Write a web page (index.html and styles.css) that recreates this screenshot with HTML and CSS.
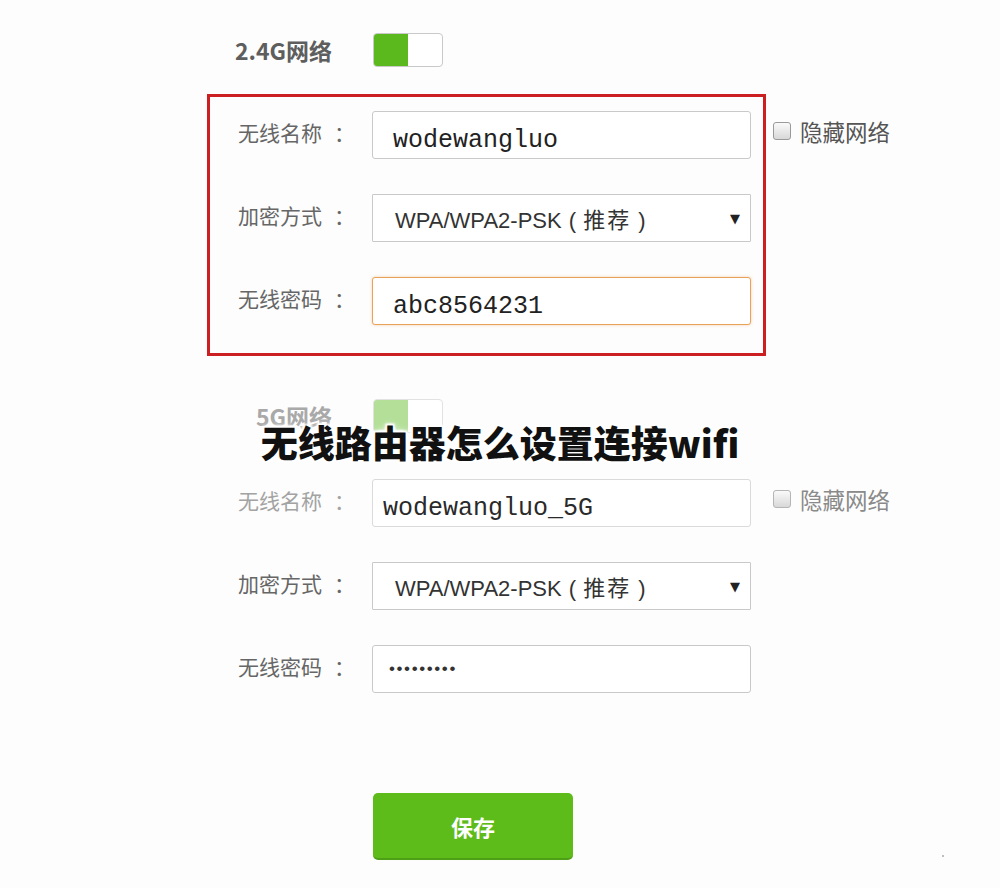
FILE: index.html
```html
<!DOCTYPE html>
<html lang="zh-CN">
<head>
<meta charset="utf-8">
<title>无线路由器怎么设置连接wifi</title>
<link rel="stylesheet" href="styles.css">
</head>
<body>
<div class="page">
  <div class="net-head">
    <div class="net-label">2.4G网络</div>
    <div class="toggle"><span class="toggle-on"></span></div>
  </div>

  <div class="section">
    <div class="box box-red">
      <div class="row">
        <div class="label">无线名称<span class="colon">：</span></div>
        <div class="field mono">wodewangluo</div>
      </div>
      <div class="row">
        <div class="label">加密方式<span class="colon">：</span></div>
        <div class="field select"><span class="sel-text">WPA/WPA2-PSK ( <span class="cjk">推荐</span> )</span><span class="arrow">▼</span></div>
      </div>
      <div class="row">
        <div class="label">无线密码<span class="colon">：</span></div>
        <div class="field mono focus">abc8564231</div>
      </div>
    </div>
    <div class="side">
      <div class="hide-opt"><span class="cb"></span><span class="cb-label">隐藏网络</span></div>
    </div>
  </div>

  <div class="net-head net-head-5g">
    <div class="net-label">5G网络</div>
    <div class="toggle"><span class="toggle-on"></span></div>
  </div>

  <div class="section section-5g">
    <div class="box">
      <div class="row row-faded">
        <div class="label">无线名称<span class="colon">：</span></div>
        <div class="field mono">wodewangluo_5G</div>
      </div>
      <div class="row">
        <div class="label">加密方式<span class="colon">：</span></div>
        <div class="field select"><span class="sel-text">WPA/WPA2-PSK ( <span class="cjk">推荐</span> )</span><span class="arrow">▼</span></div>
      </div>
      <div class="row">
        <div class="label">无线密码<span class="colon">：</span></div>
        <div class="field dots">•••••••••</div>
      </div>
    </div>
    <div class="side side-faded">
      <div class="hide-opt"><span class="cb"></span><span class="cb-label">隐藏网络</span></div>
    </div>
  </div>

  <div class="actions">
    <button class="save">保存</button>
    <span class="speck"></span>
  </div>

  <h1 class="title">无线路由器怎么设置连接wifi</h1>
</div>
</body>
</html>
```

FILE: styles.css
```css
html, body {
  margin: 0;
  padding: 0;
  background: #fdfdfd;
}

.page {
  position: relative;
  width: 1000px;
  height: 888px;
  box-sizing: border-box;
  padding-top: 33px;
  overflow: hidden;
  font-family: "Noto Sans CJK SC", "Noto Sans", sans-serif;
}

.net-head {
  display: flex;
  align-items: center;
  height: 34px;
}

.net-label {
  width: 332px;
  text-align: right;
  margin-right: 41px;
  font-size: 23px;
  font-weight: 700;
  color: #5e5e5e;
  line-height: 34px;
}

.toggle {
  width: 70px;
  height: 34px;
  box-sizing: border-box;
  border: 1px solid #c9c9c9;
  border-radius: 4px;
  background: #fff;
  overflow: hidden;
  display: flex;
}

.toggle-on {
  width: 34px;
  height: 100%;
  background: #5bb91d;
}

.net-head-5g {
  margin-top: 43px;
}

.net-head-5g .net-label {
  color: #a9a9a9;
}

.net-head-5g .toggle {
  border-color: #e2e2e2;
}

.net-head-5g .toggle-on {
  background: #b3df98;
}

.section {
  display: flex;
  align-items: flex-start;
  margin-left: 207px;
  margin-top: 27px;
}

.section-5g {
  margin-top: 29px;
}

.box {
  width: 559px;
  box-sizing: border-box;
  border: 3px solid transparent;
  padding: 14px 12px 28px 28px;
}

.box-red {
  border-color: #cc1f22;
}

.row {
  display: flex;
  align-items: center;
  height: 48px;
}

.row + .row {
  margin-top: 35px;
}

.label {
  width: 134px;
  font-size: 21px;
  color: #666;
  margin-top: -6px;
  white-space: nowrap;
}

.colon {
  margin-left: 12px;
}

.field {
  width: 379px;
  height: 48px;
  box-sizing: border-box;
  border: 1px solid #c9c9c9;
  border-radius: 3px;
  background: #fff;
  display: flex;
  align-items: center;
  padding-left: 20px;
  color: #222;
}

.row-faded .label {
  color: #a3a3a3;
}

.row-faded .field {
  border-color: #dadada;
}

.mono {
  font-family: "Liberation Mono", "DejaVu Sans Mono", monospace;
  font-size: 25px;
  padding-top: 10px;
}

.row-faded .mono {
  padding-left: 10px;
  color: #2a2a2a;
}

.focus {
  border-color: #e8a25c;
  box-shadow: 0 0 3px rgba(232, 150, 70, 0.45);
}

.select {
  border-radius: 1px;
  justify-content: space-between;
  padding-left: 22px;
  padding-right: 10px;
}

.sel-text {
  font-family: "Liberation Sans", "Noto Sans CJK SC", sans-serif;
  font-size: 22px;
  color: #333;
  word-spacing: 1px;
}

.cjk {
  font-family: "Noto Sans CJK SC", sans-serif;
  font-size: 22px;
  letter-spacing: 2px;
}

.arrow {
  font-family: "DejaVu Sans", sans-serif;
  font-size: 13px;
  color: #222;
}

.dots {
  font-family: "Liberation Sans", sans-serif;
  font-size: 17px;
  letter-spacing: 1.6px;
  color: #333;
  padding-left: 16px;
}

.side {
  margin-left: 7px;
  padding-top: 13px;
}

.hide-opt {
  display: flex;
  align-items: center;
  height: 48px;
}

.cb {
  width: 18px;
  height: 18px;
  box-sizing: border-box;
  border: 1px solid #9a9a9a;
  border-radius: 3px;
  background: linear-gradient(#fafafa, #d8d8d8);
  margin-right: 9px;
}

.cb-label {
  font-size: 22.5px;
  color: #555;
}

.side-faded .cb {
  border-color: #b5b5b5;
}

.side-faded .cb-label {
  color: #8a8a8a;
}

.actions {
  display: flex;
  align-items: flex-end;
  margin-top: 69px;
}

.save {
  margin-left: 373px;
  width: 200px;
  height: 67px;
  border: none;
  border-bottom: 2px solid #4d9f16;
  border-radius: 5px;
  background: #5dbb1a;
  color: #fff;
  font-family: "Noto Sans CJK SC", sans-serif;
  font-size: 22px;
  font-weight: 700;
  padding: 0;
}

.speck {
  width: 2px;
  height: 2px;
  border-radius: 50%;
  background: #aaa;
  margin-left: 369px;
  margin-bottom: 3px;
}

.title {
  position: absolute;
  left: 0;
  right: 0;
  top: 416px;
  margin: 0;
  text-align: center;
  font-family: "Noto Sans CJK SC", sans-serif;
  font-size: 37px;
  font-weight: 900;
  line-height: 52px;
  color: #111;
  text-shadow: 0 0 3px #fff, 2px 2px 2px #fff, -2px -2px 2px #fff, 2px -2px 2px #fff, -2px 2px 2px #fff, 0 0 8px #fff;
}
```
